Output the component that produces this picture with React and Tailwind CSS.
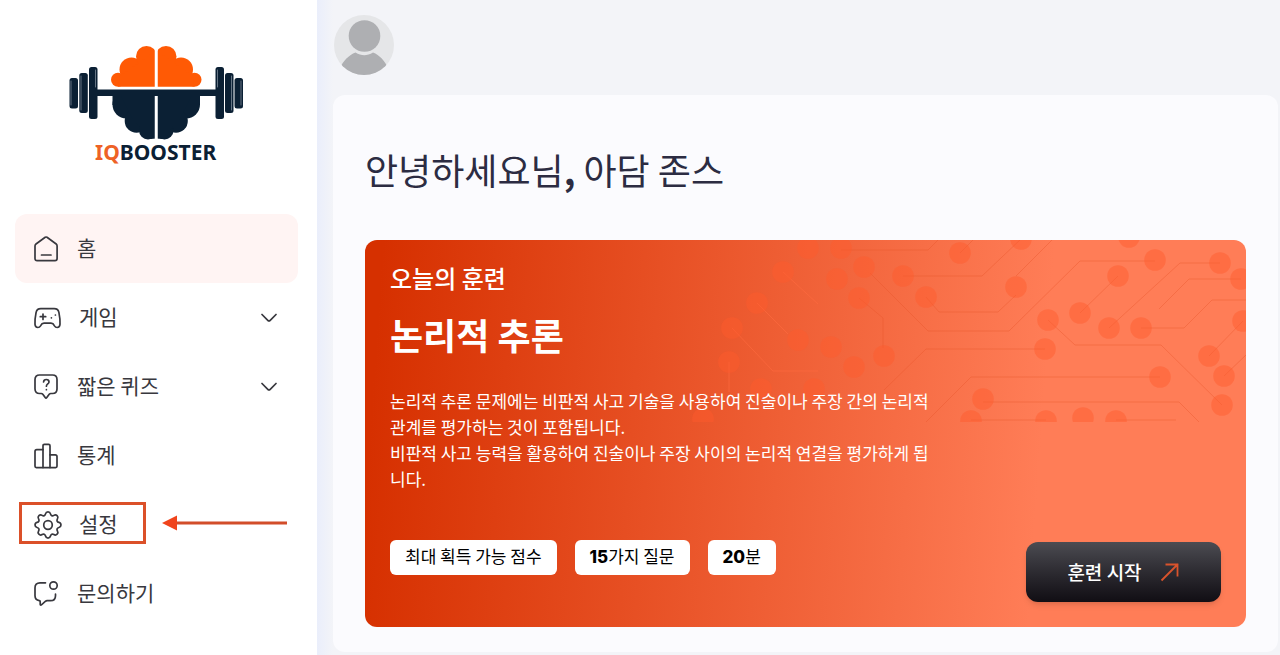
import React from 'react';

const HomeIcon = () => (
    <svg width="28" height="28" viewBox="0 0 28 28" fill="none" stroke="currentColor" strokeWidth="1.7" strokeLinecap="round" strokeLinejoin="round" aria-hidden="true">
        <path d="M2 10.900c0-.8.3-1.400 1-1.900l9.200-6.700c.6-.4 1.200-.4 1.800 0L23.200 9c.6.5.9 1.100.9 1.900v12.700c0 1.300-.8 2.100-2.100 2.100H4.100C2.800 25.700 2 24.900 2 23.600z" />
        <path d="M8.500 20h9.500" />
    </svg>
);

const GameIcon = () => (
    <svg width="30" height="28" viewBox="-1 0 30 28" fill="none" stroke="currentColor" strokeWidth="1.700" strokeLinecap="round" strokeLinejoin="round" aria-hidden="true">
        <path d="M6.800 4.700h13.400c2.600 0 4.200 1.200 4.700 3.700.7 3.400 1.300 8.600 1.100 11.900-.1 1.900-1.300 3.200-2.900 3.200-1.200 0-2-.6-2.600-1.700-.9-1.800-1.700-2.600-3.500-2.600h-7c-1.800 0-2.600.8-3.500 2.600-.6 1.100-1.400 1.700-2.600 1.700-1.600 0-2.800-1.300-2.900-3.200-.2-3.300.4-8.500 1.100-11.900.5-2.500 2.100-3.700 4.700-3.700z" />
        <path d="M9 10v5.400M6.300 12.700h5.400" />
        <path d="M17.400 13.800h.01M21.400 11h.01" />
    </svg>
);

const QuizIcon = () => (
    <svg width="28" height="28" viewBox="0 0 28 28" fill="none" stroke="currentColor" strokeWidth="1.700" strokeLinecap="round" strokeLinejoin="round" aria-hidden="true">
        <path d="M6.500 2h13c2.800 0 4.500 1.700 4.500 4.500v9.500c0 2.800-1.700 4.500-4.500 4.500h-1.700c-.7 0-1.200.3-1.600.8l-2.400 3.300c-.5.700-1.100.7-1.600 0l-2.400-3.300c-.4-.5-.9-.8-1.600-.8H6.500C3.700 20.500 2 18.800 2 16V6.500C2 3.700 3.700 2 6.500 2z" />
        <path d="M10.600 9c.1-1.500 1.200-2.500 2.700-2.500 1.600 0 2.700 1 2.700 2.400 0 2-2.600 2.100-2.600 4.300M13.400 16.700h.01" />
    </svg>
);

const StatsIcon = () => (
    <svg width="28" height="28" viewBox="0 0 28 28" fill="none" stroke="currentColor" strokeWidth="1.700" strokeLinecap="round" strokeLinejoin="round" aria-hidden="true">
        <path d="M10 7.700H3.800C2.600 7.700 2 8.300 2 9.400v14.900c0 .9.400 1.300 1.300 1.300h19.400c.9 0 1.300-.4 1.300-1.300v-9.800c0-1.100-.6-1.700-1.800-1.700h-5.200" />
        <path d="M10 25.500V3.700c0-.9.500-1.400 1.400-1.400h4.200c.9 0 1.400.5 1.400 1.400v21.800" />
    </svg>
);

const SettingsIcon = () => (
    <svg width="30" height="30" viewBox="0 0 28 28" fill="none" stroke="currentColor" strokeWidth="1.600" strokeLinecap="round" strokeLinejoin="round" aria-hidden="true">
        <circle cx="14" cy="14" r="4" />
        <path d="M11.700 3.600c.3-1.300 1-1.900 2.300-1.900s2 .6 2.300 1.900c.4 1.700 1.800 2.300 3.200 1.400 1.100-.7 2.100-.6 3 .3s1 1.900.3 3c-.9 1.400-.3 2.900 1.400 3.300 1.300.3 1.900 1.100 1.900 2.400s-.6 2-1.900 2.300c-1.700.4-2.300 1.900-1.400 3.300.7 1.100.6 2.100-.3 3s-1.900 1-3 .3c-1.400-.9-2.800-.3-3.200 1.400-.3 1.300-1 1.900-2.300 1.900s-2-.6-2.300-1.900c-.4-1.700-1.800-2.300-3.200-1.400-1.100.7-2.100.6-3-.3s-1-1.900-.3-3c.9-1.400.3-2.900-1.400-3.300-1.300-.3-1.900-1-1.900-2.300s.6-2.100 1.900-2.400c1.700-.4 2.300-1.900 1.400-3.300-.7-1.100-.6-2.100.3-3s1.900-1 3-.3c1.400.9 2.800.3 3.200-1.400z" />
    </svg>
);

const ContactIcon = () => (
    <svg width="28" height="28" viewBox="0 0 28 28" fill="none" stroke="currentColor" strokeWidth="1.700" strokeLinecap="round" strokeLinejoin="round" aria-hidden="true">
        <path d="M12.500 2.800H7C3.700 2.800 2 4.500 2 7.800v8c0 2.900 1.600 4.500 4.300 4.900.6.1.9.500.9 1.100v2.400c0 .8.600 1.100 1.200.6l4.200-3.600c.4-.3.800-.5 1.400-.5h3.500c3.300 0 5-1.700 5-5v-1.500" />
        <circle cx="20.500" cy="5.500" r="3.700" />
    </svg>
);

const ChevronIcon = () => (
    <svg width="16" height="10" viewBox="0 0 16 10" fill="none" stroke="currentColor" strokeWidth="1.700" strokeLinecap="round" strokeLinejoin="round" aria-hidden="true">
        <path d="M1 1.500l5.800 5.800c.8.800 1.600.8 2.400 0L15 1.500" />
    </svg>
);

const ArrowIcon = () => (
    <svg width="20" height="20" viewBox="0 0 20 20" fill="none" stroke="#d9532c" strokeWidth="1.800" aria-hidden="true">
        <path d="M1.500 18.500L18 2M5.500 2.500H17.500v12" />
    </svg>
);

const HalfBrain = () => (
    <>
        <g fill="#ff5a05">
            <circle cx="118" cy="79.700" r="7" />
            <circle cx="131.500" cy="69.500" r="12" />
            <circle cx="146.500" cy="56.500" r="10.500" />
            <path d="M118 86.700h38.500V50L140 62l-20 14z" />
        </g>
        <g fill="#0b2034">
            <circle cx="126.500" cy="104.500" r="14" />
            <path d="M112.500 94v11h20V94z" />
            <circle cx="136.500" cy="121" r="11.800" />
            <circle cx="148" cy="130.500" r="9" />
            <path d="M120 94h36.500v44.500l-6 .5-18-20z" />
        </g>
    </>
);

const Logo = () => (
    <svg width="176" height="128" viewBox="69 44 176 128" role="img" aria-label="IQBOOSTER">
        <HalfBrain />
        <g transform="matrix(-1 0 0 1 312.500 0)">
            <HalfBrain />
        </g>
        <path d="M156.250 44v98" stroke="#fff" strokeWidth="3" />
        <g fill="#0b2034">
            <rect x="96" y="89.500" width="121" height="6.500" />
            <rect x="69.500" y="78" width="8.500" height="30.500" rx="2.500" />
            <rect x="79.300" y="73" width="8.500" height="40" rx="2.500" />
            <rect x="89" y="67" width="8.500" height="52" rx="2.500" />
            <rect x="215.500" y="67" width="8.500" height="52" rx="2.500" />
            <rect x="225" y="73" width="8.500" height="40" rx="2.500" />
            <rect x="234.500" y="78" width="8.500" height="30.500" rx="2.500" />
        </g>
        <g stroke="#8b98a5" strokeOpacity="0.7" strokeWidth="1" strokeLinecap="round">
            <path d="M71 81v24M81 76v34M95.500 70v17M217.500 70v17M231.500 76v34M241 81v24" />
        </g>
        <text x="95" y="160" fontSize="21" fontWeight="700" fontFamily="'Noto Sans', sans-serif" fill="#0b2034">
            <tspan fill="#ee6226">IQ</tspan>BOOSTER
        </text>
    </svg>
);

const Avatar = () => (
    <svg width="60" height="60" viewBox="0 0 60 60" role="img" aria-label="프로필">
        <defs>
            <clipPath id="avatar-clip"><circle cx="30" cy="30" r="30" /></clipPath>
        </defs>
        <circle cx="30" cy="30" r="30" fill="#e5e6e8" />
        <g clipPath="url(#avatar-clip)">
            <path d="M6 53c3-7 9-13 15.500-15.500 6 3.700 11.500 3.700 17.500 0C45.500 40 51 46 54 53v9H6z" fill="#aeafb2" />
            <circle cx="30.500" cy="21" r="15.800" fill="#aeafb2" />
        </g>
    </svg>
);

const nodes = [
    [808, 248], [841, 248], [783, 272], [757, 303], [732, 328], [729, 362], [798, 340],
    [837, 279], [864, 267], [859, 298], [903, 276], [926, 297], [960, 253], [831, 347],
    [854, 367], [884, 356], [761, 389], [814, 389], [703, 419], [1021, 239], [1016, 287],
    [1048, 320], [1045, 349], [1080, 313], [1118, 276], [1129, 237], [1155, 260],
    [1109, 328], [1141, 328], [1220, 263], [1241, 279], [1243, 321], [1209, 356],
    [1224, 376], [1222, 405], [1160, 377], [983, 399], [971, 421], [1046, 421],
    [1083, 418], [1116, 421],
];

const Circuit = () => (
    <svg className="absolute right-0 top-0" width="556" height="182" viewBox="690 240 556 182" aria-hidden="true">
        <g fill="none" stroke="#ff6b3f" strokeOpacity="0.6">
            <path d="M783 272l35 32M757 303l31 31M732 328l41 43h45M729 362v30" />
        </g>
        <g fill="none" stroke="#e8562b" strokeOpacity="0.4">
            <path d="M859 298l24 20v30M841 250h87l10-10M870 273l58 58h81l71-70h75M903 276h79l39-37M960 253l13-13" />
            <path d="M926 297l13 15h59l18-17M1016 276l36-36M1048 320l27 25h86l61 60M1045 349H926l-42 41" />
            <path d="M1160 377H971l-46 46M983 402h196l21 21M971 420h75M1116 420h60M1080 313l38-37M1109 328l71-65h40" />
            <path d="M1159 309l30-30h52M1141 328h43l28-28h34M1209 356l34-35M1224 376l22-21" />
        </g>
        <g fill="#ff5a2c" fillOpacity="0.45">
            {nodes.map(([x, y]) => (
                <circle key={`${x}-${y}`} cx={x} cy={y} r="10.800" />
            ))}
        </g>
    </svg>
);

const menu = [
    { label: '홈', icon: HomeIcon, active: true },
    { label: '게임', icon: GameIcon, expandable: true },
    { label: '짧은 퀴즈', icon: QuizIcon, expandable: true },
    { label: '통계', icon: StatsIcon },
    { label: '설정', icon: SettingsIcon, highlighted: true },
    { label: '문의하기', icon: ContactIcon },
];

const MenuItem = ({ label, icon: Icon, active, expandable, highlighted }) => (
    <li className="relative">
        <a
            href="#"
            className={`flex items-center h-[69px] rounded-xl pl-[18px] pr-[21px] gap-4 text-[21px] leading-7 text-[#38383e] ${active ? 'bg-[#fff4f3]' : ''}`}
        >
            <Icon />
            <span className="grow pb-1">{label}</span>
            {expandable && <ChevronIcon />}
        </a>
        {highlighted && (
            <div className="absolute left-1 top-3 flex items-center gap-4 pointer-events-none">
                <div className="w-[127px] h-[42px] border-3 border-[#db5029]"></div>
                <svg width="125" height="16" viewBox="0 0 125 16" aria-hidden="true">
                    <path d="M14 8h111" stroke="#d24d2a" strokeWidth="3" />
                    <path d="M0 8L15 .5v15z" fill="#f0441c" />
                </svg>
            </div>
        )}
    </li>
);

const App = () => {
    return (
        <div className="flex min-h-screen bg-[#f3f4f8] font-['Noto_Sans_CJK_KR',sans-serif]">
            {/* --- SIDEBAR --- */}
            <aside className="w-[317px] shrink-0 bg-white">
                <div className="flex justify-center pt-11 pr-1 pb-[42px]">
                    <Logo />
                </div>
                <nav className="pl-[15px] pr-[19px]">
                    <ul>
                        {menu.map((item) => (
                            <MenuItem key={item.label} {...item} />
                        ))}
                    </ul>
                </nav>
            </aside>

            {/* --- CONTENT --- */}
            <main className="grow min-w-0 pt-[15px] pl-4 pr-[2px] pb-[3px] bg-[linear-gradient(90deg,#eaeefb_0,#f3f4f8_16px)] flex flex-col gap-5">
                <header className="flex pl-px">
                    <Avatar />
                </header>

                <section className="grow rounded-xl bg-[#fbfbfe] pt-[46px] px-8 pb-[25px]">
                    <h1 className="text-4xl leading-[56px] text-[#2c2c42] mb-[43px]">
                        안녕하세요님<span className="font-bold">,</span> 아담 존스
                    </h1>

                    <div className="relative overflow-hidden rounded-xl text-white pt-[22px] px-[25px] pb-[25px] bg-[linear-gradient(94deg,#d63000_2%,#ff7d57_76%)]">
                        <Circuit />
                        <div className="relative">
                            <p className="text-2xl leading-8 font-medium">오늘의 훈련</p>
                            <h2 className="mt-4 text-4xl leading-[48px] font-bold">논리적 추론</h2>
                            <div className="mt-[30px] max-w-[545px] text-[17px] leading-[26px]">
                                <p>논리적 추론 문제에는 비판적 사고 기술을 사용하여 진술이나 주장 간의 논리적 관계를 평가하는 것이 포함됩니다.</p>
                                <p>비판적 사고 능력을 활용하여 진술이나 주장 사이의 논리적 연결을 평가하게 됩니다.</p>
                            </div>
                            <div className="mt-12 flex items-start justify-between">
                                <ul className="flex gap-[18px] text-[17px] leading-8 text-black">
                                    <li className="rounded-md bg-white px-[15px] pb-[2px]">최대 획득 가능 점수</li>
                                    <li className="rounded-md bg-white px-[15px] pb-[2px]"><b className="font-['Inter'] font-extrabold">15</b>가지 질문</li>
                                    <li className="rounded-md bg-white px-[15px] pb-[2px]"><b className="font-['Inter'] font-extrabold">20</b>분</li>
                                </ul>
                                <button className="flex items-center justify-center gap-[18px] mt-[2px] w-[195px] h-[60px] rounded-xl bg-linear-to-b from-[#4c4c52] to-[#110e14] text-[19px] font-medium shadow-md">
                                    훈련 시작 <ArrowIcon />
                                </button>
                            </div>
                        </div>
                    </div>
                </section>
            </main>
        </div>
    );
};

export default App;
